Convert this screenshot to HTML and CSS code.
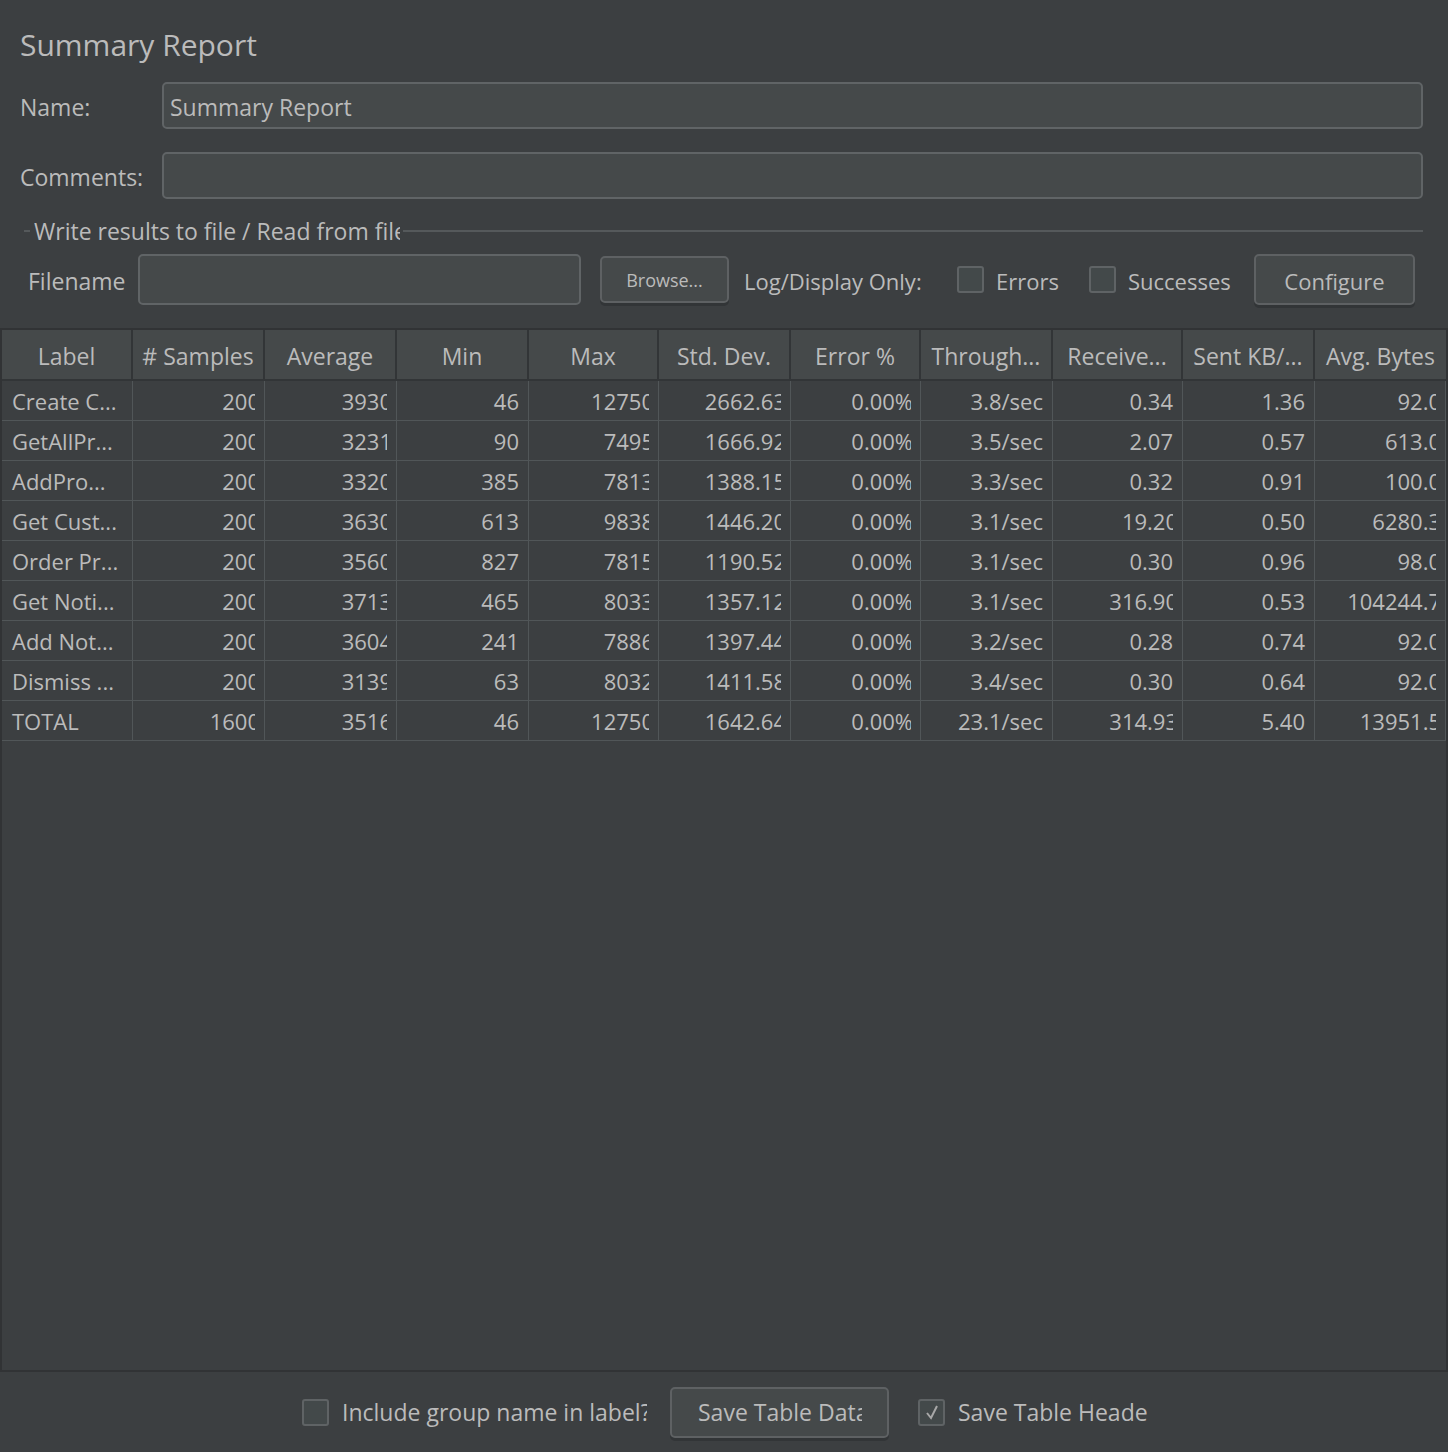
FILE: index.html
```html
<!DOCTYPE html>
<html>
<head>
<meta charset="utf-8">
<link rel="stylesheet" href="styles.css">
</head>
<body>
<div class="top">
  <div class="title">Summary Report</div>
  <div class="frow">
    <div class="flabel">Name:</div>
    <div class="field">Summary Report</div>
  </div>
  <div class="frow frow2">
    <div class="flabel">Comments:</div>
    <div class="field"></div>
  </div>
  <div class="group">
    <div class="legend">
      <span class="lline lshort"></span>
      <span class="ltext">Write results to file / Read from file</span>
      <span class="lline lrest"></span>
    </div>
    <div class="filerow">
      <div class="fnlabel">Filename</div>
      <div class="field fnfield"></div>
      <div class="btn browse">Browse...</div>
      <div class="cond logl">Log/Display Only:</div>
      <div class="cbox cb-err"></div>
      <div class="cond cbl">Errors</div>
      <div class="cbox cb-suc"></div>
      <div class="cond cbl">Successes</div>
      <div class="btn configure">Configure</div>
    </div>
  </div>
</div>

<div class="pane">
  <div class="grid">
    <div class="th">Label</div><div class="th">#&nbsp;Samples</div><div class="th">Average</div><div class="th">Min</div><div class="th">Max</div><div class="th">Std. Dev.</div><div class="th">Error %</div><div class="th">Through...</div><div class="th">Receive...</div><div class="th">Sent KB/...</div><div class="th">Avg. Bytes</div>

    <div class="td l">Create C...</div><div class="td"><span class="c">200</span></div><div class="td"><span class="c">3930</span></div><div class="td">46</div><div class="td"><span class="c">12750</span></div><div class="td"><span class="c">2662.63</span></div><div class="td"><span class="p">0.00%</span></div><div class="td">3.8/sec</div><div class="td">0.34</div><div class="td">1.36</div><div class="td"><span class="c">92.0</span></div>

    <div class="td l">GetAllPr...</div><div class="td"><span class="c">200</span></div><div class="td"><span class="c">3231</span></div><div class="td">90</div><div class="td"><span class="c">7495</span></div><div class="td"><span class="c">1666.92</span></div><div class="td"><span class="p">0.00%</span></div><div class="td">3.5/sec</div><div class="td">2.07</div><div class="td">0.57</div><div class="td"><span class="c">613.0</span></div>

    <div class="td l">AddPro...</div><div class="td"><span class="c">200</span></div><div class="td"><span class="c">3320</span></div><div class="td">385</div><div class="td"><span class="c">7813</span></div><div class="td"><span class="c">1388.15</span></div><div class="td"><span class="p">0.00%</span></div><div class="td">3.3/sec</div><div class="td">0.32</div><div class="td">0.91</div><div class="td"><span class="c">100.0</span></div>

    <div class="td l">Get Cust...</div><div class="td"><span class="c">200</span></div><div class="td"><span class="c">3630</span></div><div class="td">613</div><div class="td"><span class="c">9838</span></div><div class="td"><span class="c">1446.20</span></div><div class="td"><span class="p">0.00%</span></div><div class="td">3.1/sec</div><div class="td"><span class="c">19.20</span></div><div class="td">0.50</div><div class="td"><span class="c">6280.3</span></div>

    <div class="td l">Order Pr...</div><div class="td"><span class="c">200</span></div><div class="td"><span class="c">3560</span></div><div class="td">827</div><div class="td"><span class="c">7815</span></div><div class="td"><span class="c">1190.52</span></div><div class="td"><span class="p">0.00%</span></div><div class="td">3.1/sec</div><div class="td">0.30</div><div class="td">0.96</div><div class="td"><span class="c">98.0</span></div>

    <div class="td l">Get Noti...</div><div class="td"><span class="c">200</span></div><div class="td"><span class="c">3713</span></div><div class="td">465</div><div class="td"><span class="c">8033</span></div><div class="td"><span class="c">1357.12</span></div><div class="td"><span class="p">0.00%</span></div><div class="td">3.1/sec</div><div class="td"><span class="c">316.90</span></div><div class="td">0.53</div><div class="td"><span class="c">104244.7</span></div>

    <div class="td l">Add Not...</div><div class="td"><span class="c">200</span></div><div class="td"><span class="c">3604</span></div><div class="td">241</div><div class="td"><span class="c">7886</span></div><div class="td"><span class="c">1397.44</span></div><div class="td"><span class="p">0.00%</span></div><div class="td">3.2/sec</div><div class="td">0.28</div><div class="td">0.74</div><div class="td"><span class="c">92.0</span></div>

    <div class="td l">Dismiss ...</div><div class="td"><span class="c">200</span></div><div class="td"><span class="c">3139</span></div><div class="td">63</div><div class="td"><span class="c">8032</span></div><div class="td"><span class="c">1411.58</span></div><div class="td"><span class="p">0.00%</span></div><div class="td">3.4/sec</div><div class="td">0.30</div><div class="td">0.64</div><div class="td"><span class="c">92.0</span></div>

    <div class="td l">TOTAL</div><div class="td"><span class="c">1600</span></div><div class="td"><span class="c">3516</span></div><div class="td">46</div><div class="td"><span class="c">12750</span></div><div class="td"><span class="c">1642.64</span></div><div class="td"><span class="p">0.00%</span></div><div class="td">23.1/sec</div><div class="td"><span class="c">314.93</span></div><div class="td">5.40</div><div class="td"><span class="c">13951.5</span></div>
  </div>
</div>

<div class="bottom">
  <div class="cbox"></div>
  <div class="cond blabel1">Include group name in label?</div>
  <div class="btn savebtn"><span class="savetxt">Save Table Data</span></div>
  <div class="cbox checked">
    <svg width="20" height="21" viewBox="0 0 20 21"><path d="M5 11 L9 16 L15 4" fill="none" stroke="#a8a8a8" stroke-width="2"/></svg>
  </div>
  <div class="cond blabel2">Save Table Header</div>
</div>
</body>
</html>
```

FILE: styles.css
```css
html, body {
  margin: 0;
  padding: 0;
}
body {
  width: 1448px;
  height: 1452px;
  background: #3c3f41;
  color: #bbbbbb;
  font-family: "Open Sans", "Noto Sans", sans-serif;
  font-size: 23px;
  overflow: hidden;
}
.top {
  padding: 0 25px 0 20px;
}
.title {
  height: 82px;
  display: flex;
  align-items: center;
  font-size: 30px;
  padding-top: 6px;
  box-sizing: border-box;
}
.frow {
  display: flex;
  align-items: center;
  height: 47px;
}
.frow2 {
  margin-top: 23px;
}
.flabel {
  width: 142px;
  flex: none;
  padding-top: 3px;
}
.field {
  flex: 1;
  height: 100%;
  box-sizing: border-box;
  background: #45494a;
  border: 2px solid #606466;
  border-radius: 5px;
  padding-left: 6px;
  padding-top: 2px;
  display: flex;
  align-items: center;
}
.group {
  margin-top: 12px;
  margin-left: 4px;
}
.legend {
  height: 40px;
  display: flex;
  align-items: center;
}
.lline {
  height: 2px;
  background: #55595b;
}
.lshort {
  width: 6px;
  margin-right: 4px;
}
.ltext {
  width: 366px;
  white-space: nowrap;
  overflow: hidden;
  flex: none;
}
.lrest {
  flex: 1;
  margin-left: 3px;
}
.filerow {
  margin-top: 3px;
  display: flex;
  align-items: center;
  height: 51px;
  padding-left: 4px;
  padding-right: 8px;
}
.fnlabel {
  width: 110px;
  flex: none;
  padding-top: 2px;
}
.fnfield {
  flex: none;
  width: 443px;
}
.btn {
  box-sizing: border-box;
  background: #45494a;
  border: 2px solid #5e6163;
  border-radius: 5px;
  box-shadow: 0 3px 0 #323537;
  display: flex;
  align-items: center;
  justify-content: center;
  flex: none;
}
.cond {
  display: inline-block;
  white-space: nowrap;
  font-size: 22px;
  padding-top: 2px;
}
.browse {
  margin-left: 19px;
  width: 129px;
  height: 47px;
  font-size: 18px;
}
.logl {
  margin-left: 15px;
  width: 187px;
}
.cbox {
  box-sizing: border-box;
  width: 27px;
  height: 27px;
  background: #43494a;
  border: 2px solid #5f6365;
  border-radius: 3px;
  flex: none;
  display: flex;
  align-items: center;
  justify-content: center;
}
.cb-err {
  margin-left: 26px;
  margin-right: 12px;
}
.cb-suc {
  margin-left: 30px;
  margin-right: 12px;
}
.configure {
  margin-left: auto;
  width: 161px;
  height: 51px;
  font-size: 22px;
  padding-top: 2px;
}
.pane {
  margin-top: 23px;
  height: 1044px;
  box-sizing: border-box;
  border: 2px solid #313335;
  background: #3c3f41;
  font-size: 22px;
}
.grid {
  display: grid;
  grid-template-columns: 131px 132px 132px 132px 130px 132px 130px 132px 130px 132px 131px;
  grid-auto-rows: 40px;
  grid-template-rows: 51px;
}
.th {
  background: #45494a;
  border-right: 2px solid #323537;
  border-bottom: 2px solid #323537;
  display: flex;
  align-items: center;
  justify-content: center;
  white-space: nowrap;
  overflow: hidden;
  padding: 2px 8px 0;
  box-sizing: border-box;
  font-size: 23px;
}
.th:nth-child(11) {
  border-right: none;
}
.td {
  border-right: 1px solid #515658;
  border-bottom: 1px solid #515658;
  display: flex;
  align-items: center;
  justify-content: flex-end;
  padding: 0 9px;
  white-space: nowrap;
  box-sizing: border-box;
}
.td.l {
  justify-content: flex-start;
  padding-left: 10px;
}
.c {
  display: inline-block;
  margin-right: -5px;
  clip-path: inset(-5px 5px -5px 0);
}
.p {
  display: inline-block;
  margin-right: -2px;
  clip-path: inset(-5px 2px -5px 0);
}
.bottom {
  height: 80px;
  display: flex;
  align-items: center;
  padding-left: 302px;
}
.bottom .cond {
  font-size: 23px;
  padding-top: 0;
}
.blabel1 {
  margin-left: 13px;
  width: 305px;
  overflow: hidden;
}
.savebtn {
  margin-left: 23px;
  width: 219px;
  height: 51px;
  justify-content: flex-start;
  padding-left: 26px;
  overflow: hidden;
}
.savetxt {
  display: block;
  width: 164px;
  overflow: hidden;
  white-space: nowrap;
}
.checked {
  margin-left: 29px;
}
.blabel2 {
  margin-left: 13px;
  width: 190px;
  overflow: hidden;
}
```
